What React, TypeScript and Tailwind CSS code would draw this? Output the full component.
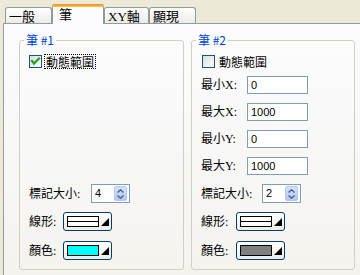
import React from "react";

const cjk = "font-['Noto_Sans_CJK_TC',sans-serif]";
const lbl = "font-['Liberation_Serif','Noto_Sans_CJK_TC',serif]";
const num = "font-['Liberation_Sans',sans-serif]";

function Tab({ label, active, w, pl }: { label: string; active?: boolean; w: string; pl: string }) {
  if (active) {
    return (
      <div
        className={`relative z-10 -mb-px h-[20px] ${w} ${pl} rounded-t-[3px] border-x border-[#919B9C] bg-[#FCFCFE] text-[13px] leading-[14px] text-black ${lbl}`}
      >
        <div className="absolute -left-px -right-px top-0 h-[3px] rounded-t-[3px] bg-gradient-to-b from-[#E68B2C] to-[#FFC73C]" />
        <div className="pt-[4px]">{label}</div>
      </div>
    );
  }
  return (
    <div
      className={`h-[16px] ${w} ${pl} rounded-t-[3px] border-x border-t border-[#919B9C] bg-gradient-to-b from-white to-[#ECEBE6] text-[13px] leading-[14px] text-black ${lbl}`}
    >
      <div className="pt-[2px]">{label}</div>
    </div>
  );
}

function CheckBox({ checked }: { checked?: boolean }) {
  return (
    <div className="w-[13px] h-[13px] border border-[#1C5180] bg-gradient-to-br from-[#DCDCD7] to-white flex items-center justify-center">
      {checked && (
        <svg width="11" height="11" viewBox="0 0 11 11">
          <path d="M2 5 L4 7.5 L9 2.5" stroke="#21A121" strokeWidth="2.2" fill="none" strokeLinecap="square" />
        </svg>
      )}
    </div>
  );
}

function Label({ text, w }: { text: string; w: string }) {
  return <div className={`${w} shrink-0 text-[12px] leading-[14px] text-black ${lbl}`}>{text}</div>;
}

function TextBox({ value }: { value: string }) {
  return (
    <div className={`w-[61px] h-[18px] border border-[#7F9DB9] bg-white pl-[3px] flex items-center text-[11px] text-black ${num}`}>
      {value}
    </div>
  );
}

function Spinner({ value }: { value: string }) {
  return (
    <div className={`w-[39px] h-[19px] border border-[#7F9DB9] bg-white pl-[3px] pr-[2px] flex items-center text-[11px] text-black ${num}`}>
      <span>{value}</span>
      <div className="ml-auto w-[13px] h-[15px] rounded-[2px] border border-[#B4C8F6] bg-gradient-to-b from-[#D6E1FC] to-[#B2C6F4] flex flex-col items-center justify-center gap-[2px]">
        <svg width="7" height="4" viewBox="0 0 7 4">
          <path d="M0.5 3.5 L3.5 0.8 L6.5 3.5" stroke="#4D6185" strokeWidth="1.4" fill="none" />
        </svg>
        <svg width="7" height="4" viewBox="0 0 7 4">
          <path d="M0.5 0.5 L3.5 3.2 L6.5 0.5" stroke="#4D6185" strokeWidth="1.4" fill="none" />
        </svg>
      </div>
    </div>
  );
}

function Dropdown({ color, line }: { color?: string; line?: boolean }) {
  return (
    <div className="w-[49px] h-[19px] border border-[#003C74] rounded-[3px] bg-gradient-to-b from-white to-[#EEEDE5] pl-[3px] flex items-center">
      <div className="relative w-[32px] h-[11px] border border-black" style={{ background: color ?? "#ffffff" }}>
        {line && <div className="absolute left-0 right-0 top-[4px] h-px bg-black" />}
      </div>
      <svg width="8" height="8" viewBox="0 0 8 8" className="ml-[2px] mt-[1px]">
        <path d="M8 0 L8 8 L0 8 Z" fill="#000" />
      </svg>
    </div>
  );
}

function Group({ title, w, children }: { title: string; w: string; children: React.ReactNode }) {
  return (
    <div className={`relative ${w} h-[230px] rounded-[3px] border border-[#D0D0BF] pl-[9px] pt-[14px] pb-[9px] flex flex-col`}>
      <div className={`absolute left-[4px] top-[-8px] px-[2px] bg-[#FBFBFC] text-[12px] leading-[14px] text-[#0046D5] ${cjk}`}>
        {title}
      </div>
      {children}
    </div>
  );
}

function BottomRows({ spin, color, labelW, dropW }: { spin: string; color: string; labelW: string; dropW: string }) {
  return (
    <div className="mt-auto flex flex-col">
      <div className="flex items-center h-[19px]">
        <Label text="標記大小:" w={labelW} />
        <Spinner value={spin} />
      </div>
      <div className="flex items-center h-[19px] mt-[9px]">
        <Label text="線形:" w={dropW} />
        <Dropdown line />
      </div>
      <div className="flex items-center h-[19px] mt-[10px]">
        <Label text="顏色:" w={dropW} />
        <Dropdown color={color} />
      </div>
    </div>
  );
}

export default function App() {
  return (
    <div className="w-[360px] h-[275px] overflow-hidden bg-[#ECE9D8] flex flex-col">
      <div className="h-[23px] shrink-0 flex items-end pl-[5px]">
        <Tab label="一般" w="w-[47px]" pl="pl-[3px]" />
        <Tab label="筆" active w="w-[52px]" pl="pl-[6px]" />
        <Tab label="XY軸" w="w-[45px]" pl="pl-[3px]" />
        <Tab label="顯現" w="w-[47px]" pl="pl-[3px]" />
      </div>
      <div className="flex-1 ml-[3px] w-[360px] border-l border-t border-[#919B9C] bg-gradient-to-b from-[#FCFCFE] to-[#F4F3EE] pl-[15px] pt-[16px] flex gap-[7px]">
        <Group title="筆 #1" w="w-[165px]">
          <div className="flex items-center h-[13px]">
            <CheckBox checked />
            <div className={`ml-[2px] px-px border border-dotted border-black text-[12px] leading-[13px] text-black ${cjk}`}>動態範圍</div>
          </div>
          <BottomRows spin="4" color="#00FFFF" labelW="w-[62px]" dropW="w-[34px]" />
        </Group>
        <Group title="筆 #2" w="w-[164px]">
          <div className="flex items-center h-[13px] pl-px">
            <CheckBox />
            <div className={`ml-[4px] text-[12px] leading-[13px] text-black ${cjk}`}>動態範圍</div>
          </div>
          <div className="flex flex-col gap-[9px] mt-[8px]">
            {[
              ["最小X:", "0"],
              ["最大X:", "1000"],
              ["最小Y:", "0"],
              ["最大Y:", "1000"],
            ].map(([l, v]) => (
              <div key={l} className="flex items-center h-[18px]">
                <Label text={l} w="w-[46px]" />
                <TextBox value={v} />
              </div>
            ))}
          </div>
          <BottomRows spin="2" color="#808080" labelW="w-[61px]" dropW="w-[35px]" />
        </Group>
      </div>
    </div>
  );
}
